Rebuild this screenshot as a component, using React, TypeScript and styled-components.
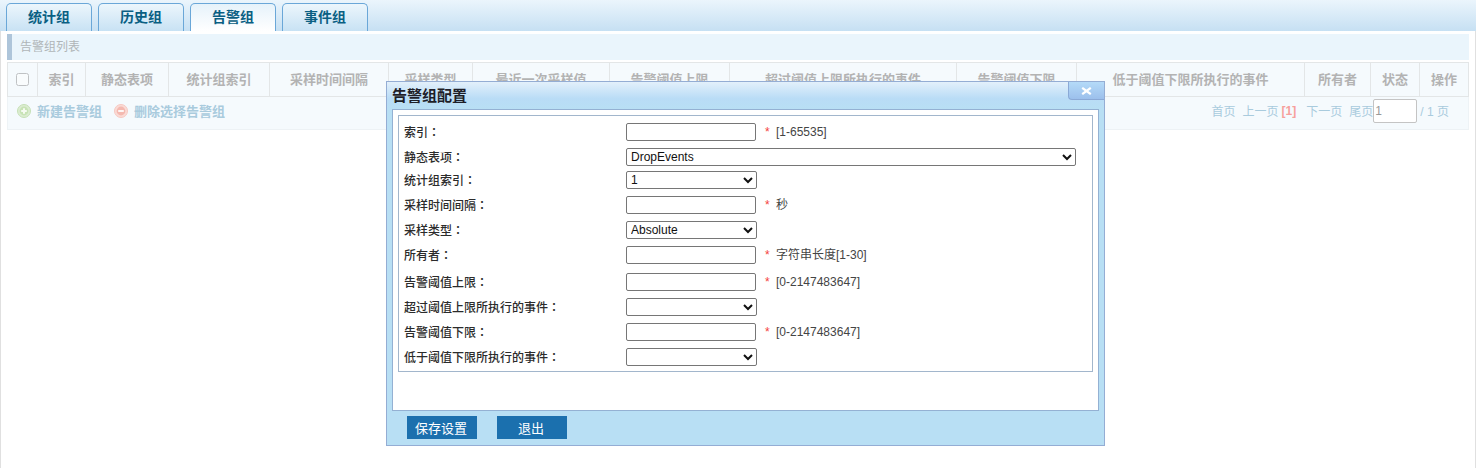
import React from 'react';
import styled, { createGlobalStyle } from 'styled-components';

const FONT = '"Liberation Sans", "Noto Sans CJK SC", sans-serif';

const Global = createGlobalStyle`
  html, body { margin: 0; padding: 0; background: #fff; }
  body { font: 12px ${FONT}; color: #333; }
  * { box-sizing: border-box; }
`;

const Page = styled.div`
  position: relative;
  width: 1476px;
  height: 468px;
  overflow: hidden;
  background: #fff;
`;

const TabBar = styled.div`
  display: flex;
  align-items: flex-end;
  gap: 6px;
  height: 31px;
  padding-left: 6px;
  background: linear-gradient(#ebf5fc, #c6e0f3);
`;

const Tab = styled.div<{ $active?: boolean }>`
  width: 86px;
  height: 28px;
  border: 1px solid #6aa7d8;
  border-bottom: 0;
  border-radius: 5px 5px 0 0;
  background: ${p => (p.$active ? 'linear-gradient(#e6f2fa, #ffffff)' : 'linear-gradient(#ecf6fc, #c8e2f4)')};
  color: #0a5f83;
  font-size: 14px;
  font-weight: bold;
  line-height: 26px;
  text-align: center;
`;

const Content = styled.div`
  height: 437px;
  padding: 3px 6px 0;
  border-left: 1px solid #e0e0e0;
  border-right: 1px solid #e0e0e0;
`;

const ListTitle = styled.div`
  height: 26px;
  margin-bottom: 2px;
  padding-left: 8px;
  border-left: 5px solid #aec5da;
  background: #eaf5fc;
  color: #b0b5b8;
  line-height: 26px;
`;

const GridTable = styled.table`
  width: 1462px;
  table-layout: fixed;
  border-collapse: collapse;
  background: #f5fafd;
`;

const HeadCell = styled.th<{ $w: number }>`
  width: ${p => p.$w}px;
  height: 34px;
  padding: 0 0 3px;
  border: 1px solid #e3e6e7;
  color: #b3b3b3;
  font-size: 13px;
  font-weight: bold;
  text-align: center;
`;

const FadedCheck = styled.input`
  display: block;
  width: 13px;
  height: 13px;
  margin: 3px auto 0;
  opacity: 0.42;
`;

const Toolbar = styled.div`
  display: flex;
  align-items: center;
  height: 33px;
  padding: 0 10px 5px 9px;
  background: #f5fafd;
  border-bottom: 1px solid #edf2f5;
  border-left: 1px solid #eef3f6;
  border-right: 1px solid #eef3f6;
`;

const Action = styled.div`
  display: flex;
  align-items: center;
  gap: 6px;
  margin-right: 12px;
  color: #a9cbdd;
  font-size: 13px;
  font-weight: bold;
`;

const Pager = styled.div`
  display: flex;
  align-items: center;
  margin-left: auto;
  color: #a9cbdd;
  font-size: 12px;
`;

const PagerLink = styled.span<{ $gap: number }>`
  margin-right: ${p => p.$gap}px;
`;

const Current = styled.span`
  margin-right: 10px;
  color: #f7a09c;
  font-weight: bold;
`;

const PageInput = styled.input`
  width: 44px;
  height: 24px;
  margin: 0 3px 0 0;
  padding: 0 1px;
  border: 1px solid #c4c4c4;
  border-radius: 2px;
  background: #fff;
  color: #999;
  font: 12px ${FONT};
  outline: 0;
`;

const Modal = styled.div`
  position: absolute;
  left: 386px;
  top: 81px;
  width: 719px;
  height: 365px;
  border: 1px solid #94add4;
  background: #b8dff4;
`;

const ModalHead = styled.div`
  display: flex;
  justify-content: space-between;
  height: 27px;
  padding-left: 5px;
  background: linear-gradient(#e3f0fb 0%, #b9dcf6 62%, #b8dff4 100%);
`;

const ModalTitle = styled.div`
  color: #1e1e28;
  font-size: 15px;
  font-weight: bold;
  line-height: 27px;
`;

const CloseBox = styled.div`
  display: flex;
  align-items: center;
  justify-content: center;
  width: 36px;
  height: 18px;
  border-left: 1px solid #8aa9d6;
  border-bottom: 1px solid #8aa9d6;
  border-bottom-left-radius: 4px;
  background: linear-gradient(#b4daf8, #9cc0ec);
`;

const ModalBody = styled.div`
  height: 302px;
  margin: 0 5px;
  padding: 5px;
  border: 1px solid #94b1d3;
  background: #fff;
`;

const FormBox = styled.div`
  height: 257px;
  padding: 7px 5px 0;
  border: 1px solid #a2b6cc;
`;

const FormRow = styled.div<{ $h: number }>`
  display: flex;
  align-items: flex-start;
  height: ${p => p.$h}px;
`;

const FieldLabel = styled.label`
  width: 222px;
  flex: none;
  color: #2b2b2b;
  font-weight: 500;
  line-height: 18px;
  white-space: nowrap;
`;

const Colon = styled.span`
  font-family: "Noto Sans CJK TC", sans-serif;
`;

const TextField = styled.input`
  width: 130px;
  height: 18px;
  margin: 0;
  padding: 0 2px;
  border: 1px solid #767676;
  border-radius: 2px;
  background: #fff;
  outline: 0;
`;

const SelectField = styled.select<{ $w: number }>`
  width: ${p => p.$w}px;
  height: 18px;
  margin: 0;
  padding: 0;
  border: 1px solid #767676;
  border-radius: 2px;
  background: #fff;
  color: #111;
  font: 12px ${FONT};
`;

const Hint = styled.span`
  margin-left: 9px;
  color: #444;
  line-height: 18px;
  white-space: nowrap;
`;

const Star = styled.span`
  display: inline-block;
  width: 11px;
  color: #f4433c;
`;

const ModalFoot = styled.div`
  display: flex;
  gap: 20px;
  padding: 5px 0 0 20px;
`;

const FootButton = styled.button`
  width: 70px;
  height: 23px;
  padding: 0 2px 0 0;
  border: 0;
  background: #1b70ae;
  color: #fff;
  font: 13px ${FONT};
`;

const columns: [string, number][] = [
  ['索引', 48], ['静态表项', 83], ['统计组索引', 101], ['采样时间间隔', 119], ['采样类型', 84],
  ['最近一次采样值', 137], ['告警阈值上限', 120], ['超过阈值上限所执行的事件', 227], ['告警阈值下限', 120],
  ['低于阈值下限所执行的事件', 228], ['所有者', 66], ['状态', 49], ['操作', 49],
];

type Field =
  | { label: string; h: number; kind: 'text'; hint: string }
  | { label: string; h: number; kind: 'select'; value: string; w: number };

const fields: Field[] = [
  { label: '索引', h: 25, kind: 'text', hint: '[1-65535]' },
  { label: '静态表项', h: 23, kind: 'select', value: 'DropEvents', w: 450 },
  { label: '统计组索引', h: 25, kind: 'select', value: '1', w: 131 },
  { label: '采样时间间隔', h: 25, kind: 'text', hint: '秒' },
  { label: '采样类型', h: 25, kind: 'select', value: 'Absolute', w: 131 },
  { label: '所有者', h: 27, kind: 'text', hint: '字符串长度[1-30]' },
  { label: '告警阈值上限', h: 25, kind: 'text', hint: '[0-2147483647]' },
  { label: '超过阈值上限所执行的事件', h: 25, kind: 'select', value: '', w: 131 },
  { label: '告警阈值下限', h: 25, kind: 'text', hint: '[0-2147483647]' },
  { label: '低于阈值下限所执行的事件', h: 25, kind: 'select', value: '', w: 131 },
];

const PlusIcon = () => (
  <svg width="14" height="14" viewBox="0 0 14 14" aria-hidden="true">
    <circle cx="7" cy="7" r="6.5" fill="#dcedd2" stroke="#c6e0b6" />
    <circle cx="7" cy="7" r="4.4" fill="#c8e3b6" />
    <path d="M7 4.2v5.6M4.2 7h5.6" stroke="#f6fbf2" strokeWidth="2" />
  </svg>
);

const MinusIcon = () => (
  <svg width="14" height="14" viewBox="0 0 14 14" aria-hidden="true">
    <circle cx="7" cy="7" r="6.5" fill="#fadbd6" stroke="#f6c8c1" />
    <circle cx="7" cy="7" r="4.4" fill="#f4b9b0" />
    <path d="M4.2 7h5.6" stroke="#fef6f4" strokeWidth="2" />
  </svg>
);

const CloseIcon = () => (
  <svg width="11" height="8" viewBox="0 0 11 8" aria-hidden="true">
    <path d="M1.2 0.8 9.8 7.2M9.8 0.8 1.2 7.2" stroke="#fff" strokeWidth="2.2" />
  </svg>
);

export default function App() {
  return (
    <Page>
      <Global />
      <TabBar>
        <Tab>统计组</Tab>
        <Tab>历史组</Tab>
        <Tab $active>告警组</Tab>
        <Tab>事件组</Tab>
      </TabBar>
      <Content>
        <ListTitle>告警组列表</ListTitle>
        <GridTable>
          <thead>
            <tr>
              <HeadCell $w={30}><FadedCheck type="checkbox" /></HeadCell>
              {columns.map(([name, w]) => (
                <HeadCell key={name} $w={w}>{name}</HeadCell>
              ))}
            </tr>
          </thead>
        </GridTable>
        <Toolbar>
          <Action><PlusIcon />新建告警组</Action>
          <Action><MinusIcon />删除选择告警组</Action>
          <Pager>
            <PagerLink $gap={7}>首页</PagerLink>
            <PagerLink $gap={3}>上一页</PagerLink>
            <Current>[1]</Current>
            <PagerLink $gap={7}>下一页</PagerLink>
            <span>尾页</span>
            <PageInput defaultValue="1" />
            <PagerLink $gap={9}>/ 1 页</PagerLink>
          </Pager>
        </Toolbar>
      </Content>
      <Modal>
        <ModalHead>
          <ModalTitle>告警组配置</ModalTitle>
          <CloseBox><CloseIcon /></CloseBox>
        </ModalHead>
        <ModalBody>
          <FormBox>
            {fields.map(f => (
              <FormRow key={f.label} $h={f.h}>
                <FieldLabel>{f.label}<Colon>：</Colon></FieldLabel>
                {f.kind === 'text' ? (
                  <>
                    <TextField type="text" />
                    <Hint><Star>*</Star>{f.hint}</Hint>
                  </>
                ) : (
                  <SelectField $w={f.w} defaultValue={f.value}>
                    <option value={f.value}>{f.value}</option>
                  </SelectField>
                )}
              </FormRow>
            ))}
          </FormBox>
        </ModalBody>
        <ModalFoot>
          <FootButton type="button">保存设置</FootButton>
          <FootButton type="button">退出</FootButton>
        </ModalFoot>
      </Modal>
    </Page>
  );
}
